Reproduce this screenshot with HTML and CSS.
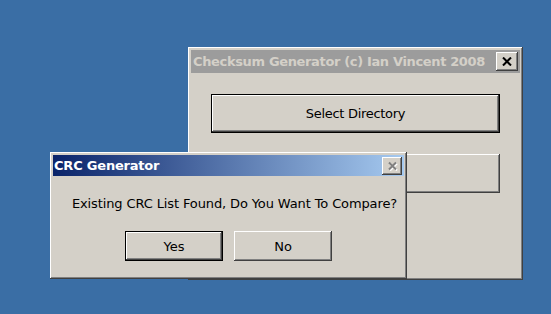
FILE: index.html
```html
<!DOCTYPE html>
<html lang="en">
  <head>
    <meta charset="UTF-8" />
    <title>CRC Generator</title>
    <link rel="stylesheet" href="styles.css">
  </head>
  <body>
    <div class="desktop">
      <!-- main window, behind -->
      <div class="window main-window">
        <div class="titlebar inactive">
          <span class="title">Checksum Generator (c) Ian Vincent 2008</span>
          <button class="close-btn">
            <svg width="10" height="9" viewBox="0 0 10 9">
              <path d="M1 0.5 L9 8.5 M9 0.5 L1 8.5" stroke="#000" stroke-width="2" />
            </svg>
          </button>
        </div>
        <div class="main-body">
          <button class="btn default wide">Select Directory</button>
          <button class="btn wide"></button>
        </div>
      </div>

      <!-- message box, in front -->
      <div class="window dialog">
        <div class="titlebar active">
          <span class="title">CRC Generator</span>
          <button class="close-btn disabled">
            <svg width="11" height="10" viewBox="0 0 11 10">
              <path d="M2 1.5 L9 8.5 M9 1.5 L2 8.5" stroke="#fff" stroke-width="2" transform="translate(1 1)" />
              <path d="M1 0.5 L8 7.5 M8 0.5 L1 7.5" stroke="#808080" stroke-width="2" transform="translate(1 1)" />
            </svg>
          </button>
        </div>
        <div class="dialog-body">
          <p class="message">Existing CRC List Found, Do You Want To Compare?</p>
          <div class="actions">
            <button class="btn default">Yes</button>
            <button class="btn">No</button>
          </div>
        </div>
      </div>
    </div>
  </body>
</html>
```

FILE: styles.css
```css
html,
body {
  margin: 0;
  height: 100%;
}
body {
  background: #3a6ea5;
  font-family: "DejaVu Sans", Tahoma, sans-serif;
  font-size: 12px;
  overflow: hidden;
}
.desktop {
  position: relative;
  width: 551px;
  height: 314px;
}
.window {
  position: absolute;
  box-sizing: border-box;
  background: #d4d0c8;
  padding: 3px;
  display: flex;
  flex-direction: column;
  box-shadow: inset -1px -1px #404040, inset 1px 1px #ffffff,
    inset -2px -2px #808080, inset 2px 2px #d4d0c8;
}
.main-window {
  left: 188px;
  top: 47px;
  width: 335px;
  height: 233px;
}
.dialog {
  left: 50px;
  top: 152px;
  width: 357px;
  height: 127px;
}
.titlebar {
  display: flex;
  align-items: center;
  justify-content: space-between;
  padding: 0 2px 0 2px;
  font-weight: bold;
  font-size: 13px;
}
.titlebar.inactive {
  height: 23px;
  background: #9c9c9c;
  color: #d4d0c8;
}
.titlebar.inactive .title {
  letter-spacing: -0.35px;
}
.titlebar.active {
  height: 21px;
  padding-left: 1px;
  background: linear-gradient(to right, #0a246a, #a6caf0);
  color: #ffffff;
}
.title {
  white-space: nowrap;
  letter-spacing: -0.2px;
}
.close-btn {
  box-sizing: border-box;
  width: 22px;
  height: 19px;
  padding: 0;
  display: flex;
  align-items: center;
  justify-content: center;
  background: #d4d0c8;
  border: none;
  box-shadow: inset -1px -1px #404040, inset 1px 1px #ffffff,
    inset -2px -2px #808080;
}
.close-btn.disabled {
  width: 20px;
  height: 18px;
}
.main-body {
  display: flex;
  flex-direction: column;
  gap: 21px;
  padding: 21px 20px 0;
}
.btn {
  box-sizing: border-box;
  font-family: inherit;
  font-size: 13px;
  color: #000;
  background: #d4d0c8;
  border: none;
  padding: 0;
  box-shadow: inset -1px -1px #404040, inset 1px 1px #ffffff,
    inset -2px -2px #808080;
}
.btn.default {
  box-shadow: inset -1px -1px #000, inset 1px 1px #000,
    inset -2px -2px #404040, inset 2px 2px #ffffff, inset -3px -3px #808080;
}
.btn.wide {
  height: 39px;
  letter-spacing: -0.3px;
}
.dialog-body {
  display: flex;
  flex-direction: column;
  align-items: center;
}
.message {
  margin: 20px 0 0;
  font-size: 13px;
  letter-spacing: -0.12px;
  padding-left: 12px;
}
.actions {
  display: flex;
  gap: 11px;
  margin-top: 20px;
  margin-left: 0;
}
.actions .btn {
  width: 98px;
  height: 30px;
}
```
